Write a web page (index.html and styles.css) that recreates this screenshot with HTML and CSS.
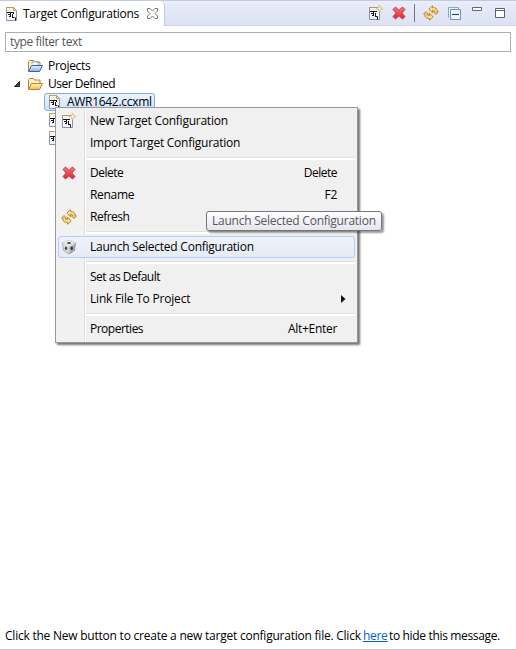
FILE: index.html
```
<!DOCTYPE html>
<html lang="en">
<head>
<meta charset="utf-8">
<title>Target Configurations</title>
<link rel="stylesheet" href="styles.css">
</head>
<body>
<svg class="defs" width="0" height="0">
  <defs>
    <linearGradient id="gold" x1="0" y1="0" x2="0" y2="1"><stop offset="0" stop-color="#fff5c4"/><stop offset="1" stop-color="#f0bd4c"/></linearGradient>
    <linearGradient id="blue" x1="0" y1="0" x2="0" y2="1"><stop offset="0" stop-color="#e8f2ff"/><stop offset="1" stop-color="#88ace8"/></linearGradient>
    <linearGradient id="red" x1="0" y1="0" x2="0" y2="1"><stop offset="0" stop-color="#f77a7a"/><stop offset="1" stop-color="#df1f32"/></linearGradient>
    <symbol id="page" viewBox="0 0 16 16">
      <path d="M2.500 1.500h7l3 3v10h-10z" fill="#f6f8fc" stroke="#8893b3"/>
      <path d="M2.500 5V1.500h7l3 3" fill="none" stroke="#c4a04e"/>
      <path d="M9.500 1.500v3h3z" fill="#f3df9c" stroke="#c4a04e"/>
      <path d="M3 6.500h7M6.500 6v5M4 8.500h2M5 10.500h2M9.500 6v2M8.500 8v4M8 11.500h2.500M11.500 11.500v3" fill="none" stroke="#161616"/>
    </symbol>
    <symbol id="newpage" viewBox="0 0 16 16">
      <path d="M1.500 2.500h10v12h-10z" fill="#f6f8fc" stroke="#8590ac"/>
      <path d="M1.500 5V2.500h7" fill="none" stroke="#b29859"/>
      <path d="M2 6.500h7M5.500 6v5M3 8.500h2M4 10.500h2M7.500 8v4M7 11.500h2.500M9.500 11.500v3" fill="none" stroke="#161616"/>
      <path d="M11.500 0l1 2.500L15 3.500l-2.500 1L11.500 7l-1-2.500L8 3.500l2.500-1z" fill="#fff2bd" stroke="#d6b26a" stroke-width=".8"/>
    </symbol>
    <symbol id="delete" viewBox="0 0 14 14">
      <path d="M3.500 1L7 4.300 10.500 1 13 3.500 9.800 7 13 10.500 10.500 13 7 9.800 3.500 13 1 10.500 4.200 7 1 3.500z" fill="url(#red)" stroke="#cb3542" stroke-linejoin="round"/>
    </symbol>
    <symbol id="refresh" viewBox="0 0 16 16">
      <path id="arrowhalf" d="M5.800 4.200L9.500.700v2c3.200-.6 5 1.300 4.700 4l1.200.1-2.400 2.700-2.600-2.700 1.300-.1c0-1.100-.8-1.500-2.200-1.200v2.200z" fill="url(#gold)" stroke="#b87f18" stroke-width=".9" stroke-linejoin="round"/>
      <use href="#arrowhalf" transform="rotate(180 8 8)"/>
    </symbol>
    <symbol id="folder-blue" viewBox="0 0 16 14">
      <path d="M1.500 12V2.500l1-1h4l1 1.500h5.500v3" fill="#fff3bf" stroke="#ad8740"/>
      <path d="M5 5V3h6v3" fill="#fff" stroke="#7890c2" stroke-width=".8"/>
      <path d="M1.500 12.500l3-6h11l-3 6z" fill="url(#blue)" stroke="#3c60ac" stroke-linejoin="round"/>
    </symbol>
    <symbol id="folder-gold" viewBox="0 0 16 14">
      <path d="M1.500 12V2.500l1-1h4l1 1.500h5.500v3" fill="#fff3cc" stroke="#b57b34"/>
      <path d="M1.500 12.500l3-6h11l-3 6z" fill="url(#gold)" stroke="#bd812f" stroke-linejoin="round"/>
    </symbol>
  </defs>
</svg>

<div class="view">
  <header class="bar">
    <div class="tab">
      <svg class="i16"><use href="#page"/></svg>
      <span class="tab-name">Target Configurations</span>
      <svg class="close" viewBox="0 0 11 11"><path d="M.5.500h2.500L5.500 3 8 .5h2.500V3L8 5.500 10.500 8v2.500H8L5.500 8 3 10.500H.5V8L3 5.500.5 3z" fill="#fff" stroke="#777"/></svg>
    </div>
    <div class="tools">
      <svg class="i16"><use href="#newpage"/></svg>
      <svg class="i14 tool-delete"><use href="#delete"/></svg>
      <span class="divider"></span>
      <svg class="i16 tool-refresh"><use href="#refresh"/></svg>
      <svg class="tool-collapse" width="13" height="13" viewBox="0 0 13 13"><path d="M.5 10.500V.500h10v2" fill="#e5f1f8" stroke="#8daabd"/><path d="M2.500 2.500h10v10h-10z" fill="#eef7ff" stroke="#7890b6"/><path d="M4 7.500h7" stroke="#0a3d80"/></svg>
      <svg class="tool-min" width="10" height="4" viewBox="0 0 10 4"><path d="M.5.500h9v3h-9z" fill="#fff" stroke="#68686c"/></svg>
      <svg class="tool-max" width="10" height="10" viewBox="0 0 10 10"><path d="M.5.500h9v9h-9zM1 2.500h8" fill="#fff" stroke="#626266"/></svg>
    </div>
  </header>

  <div class="filter">type filter text</div>

  <ul class="tree">
    <li class="node"><span class="twist"></span><svg class="folder"><use href="#folder-blue"/></svg><span>Projects</span></li>
    <li class="node"><span class="twist"><svg width="6" height="6" viewBox="0 0 6 6"><path d="M5.500.500v5h-5z" fill="#444" stroke="#222"/></svg></span><svg class="folder"><use href="#folder-gold"/></svg><span class="tight">User Defined</span></li>
    <li class="leaf selected"><svg class="i16"><use href="#page"/></svg><span>AWR1642.ccxml</span></li>
    <li class="leaf"><svg class="i16"><use href="#page"/></svg></li>
    <li class="leaf"><svg class="i16"><use href="#page"/></svg></li>
  </ul>

  <footer class="note"><span class="n1">Click the New button to create a new target configuration file. Click</span><a class="n2">here</a><span class="n3">to hide this message.</span></footer>
</div>

<div class="menu">
  <div class="item"><span class="ico"><svg class="i16"><use href="#newpage"/></svg></span><span class="loose">New Target Configuration</span></div>
  <div class="item"><span class="ico"></span><span class="loose">Import Target Configuration</span></div>
  <div class="sep"></div>
  <div class="item"><span class="ico"><svg class="i14"><use href="#delete"/></svg></span><span class="tight">Delete</span><span class="key tight">Delete</span></div>
  <div class="item"><span class="ico"></span><span>Rename</span><span class="key">F2</span></div>
  <div class="item"><span class="ico"><svg class="i16"><use href="#refresh"/></svg></span><span class="tight">Refresh</span></div>
  <div class="sep"></div>
  <div class="item hot"><span class="ico"><svg class="i16" viewBox="0 0 16 16"><path d="M1.500 4L8 1l6.500 3L8 7z" fill="#f4f4f4" stroke="#bbb" stroke-width=".7"/><path d="M1.500 4L8 7v8l-5.500-3.500z" fill="#d8d8d8" stroke="#999" stroke-width=".7"/><path d="M14.500 4L8 7v8l5.500-3.500z" fill="#a9a9a9" stroke="#888" stroke-width=".7"/><ellipse cx="8" cy="3.900" rx="2" ry="1" fill="#444"/><ellipse cx="5" cy="9.300" rx="1.200" ry="1.700" fill="#444"/><ellipse cx="10.800" cy="9.300" rx="1.200" ry="1.700" fill="#333"/><path d="M8 7v7.500M2 4.500L8 7.200l6-2.700" stroke="#f4f4f4" fill="none"/></svg></span><span class="loose">Launch Selected Configuration</span></div>
  <div class="sep"></div>
  <div class="item"><span class="ico"></span><span class="tight">Set as Default</span></div>
  <div class="item"><span class="ico"></span><span class="link-file">Link File To Project</span><svg class="sub" width="5" height="8" viewBox="0 0 5 8"><path d="M0 0l4.500 4L0 8z" fill="#111"/></svg></div>
  <div class="sep"></div>
  <div class="item"><span class="ico"></span><span class="tight">Properties</span><span class="key">Alt+Enter</span></div>
</div>
<div class="tip">Launch Selected Configuration</div>
</body>
</html>
```
FILE: styles.css
```
* { box-sizing: border-box; }
body {
  margin: 0;
  width: 516px;
  height: 650px;
  overflow: hidden;
  background: #fff;
  color: #000;
  font: 12px/18px "Open Sans", "Noto Sans", sans-serif;
  letter-spacing: -0.3px;
  white-space: nowrap;
}
svg { display: block; flex: none; }
.defs { position: absolute; }
.i16 { width: 16px; height: 16px; }
.i14 { width: 14px; height: 14px; }
.loose { letter-spacing: -0.24px; }
.tight { letter-spacing: -0.5px; }
.link-file { letter-spacing: -0.2px; }

.view { display: flex; flex-direction: column; height: 650px; border-bottom: 1px solid #c8cad8; }
.bar {
  display: flex;
  justify-content: space-between;
  height: 26px;
  border-top: 1px solid #c3cae0;
  border-bottom: 1px solid #d0d5e5;
  background: linear-gradient(#e9edfa, #dce2f3);
}
.tab {
  display: flex;
  align-items: center;
  width: 165px;
  height: 25px;
  padding-left: 4px;
  background: #fff;
  border-right: 1px solid #c3cae0;
  border-top-right-radius: 5px;
}
.tab-name { width: 116px; margin-left: 3px; letter-spacing: -0.24px; }
.close { width: 11px; height: 11px; margin-left: 8px; }
.tools { display: flex; align-items: center; padding-right: 11px; }
.tool-delete { margin-left: 8px; }
.divider { width: 1px; height: 18px; margin-left: 8px; background: #77777c; }
.tool-refresh { margin-left: 8px; }
.tool-collapse { margin-left: 9px; }
.tool-min { margin: -8px 0 0 11px; }
.tool-max { margin-left: 13px; }

.filter {
  height: 20px;
  margin: 6px 5px 0;
  padding: 0 4px;
  border: 1px solid #abadb3;
  color: #555;
  letter-spacing: -0.4px;
}
.tree { flex: 1; margin: 5px 0 0; padding: 0; list-style: none; }
.node, .leaf { display: flex; align-items: center; height: 18px; }
.twist { width: 27px; padding-left: 14px; }
.folder { width: 16px; height: 14px; margin-right: 5px; }
.leaf { width: 111px; margin-left: 44px; padding-left: 3px; }
.leaf span { margin-left: 4px; }
.selected {
  padding-left: 2px;
  border: 1px solid #84acdd;
  border-radius: 3px;
  background: linear-gradient(#ecf4fe, #cde2fc);
}
.note { display: flex; height: 22px; padding-left: 5px; }
.n1 { width: 358px; letter-spacing: -0.23px; }
.n2 { width: 26px; color: #0066cc; text-decoration: underline; }
.n3 { letter-spacing: -0.34px; }

.menu {
  position: absolute;
  left: 55px;
  top: 107px;
  width: 303px;
  height: 236px;
  padding: 2px;
  border: 1px solid #979797;
  background: linear-gradient(90deg, #f1f1f1 28px, #e0e0e0 28px, #e0e0e0 29px, #fff 29px, #fff 30px, #f0f0f0 30px);
  box-shadow: 2px 2px 2px rgba(0, 0, 0, .55);
}
.item { display: flex; align-items: center; height: 22px; padding-right: 18px; }
.ico { display: flex; align-items: center; justify-content: center; width: 22px; margin-right: 10px; }
.key { margin-left: auto; }
.sub { margin: 0 -9px 0 auto; }
.sep { height: 8px; padding-top: 3px; margin-left: 28px; }
.sep::before { content: ""; display: block; height: 2px; background: #fff; border-top: 1px solid #e0e0e0; }
.hot {
  border-radius: 3px;
  box-shadow: inset 0 0 0 1px #aecff7;
  background: linear-gradient(rgba(240, 244, 250, .75), rgba(225, 234, 246, .8));
}
.tip {
  position: absolute;
  left: 206px;
  top: 211px;
  width: 176px;
  height: 20px;
  padding-left: 5px;
  border: 1px solid #767676;
  border-radius: 3px;
  background: linear-gradient(#fff, #e4e5f0);
  box-shadow: 2px 2px 2px rgba(0, 0, 0, .4);
  color: #575757;
  letter-spacing: -0.24px;
}
```
